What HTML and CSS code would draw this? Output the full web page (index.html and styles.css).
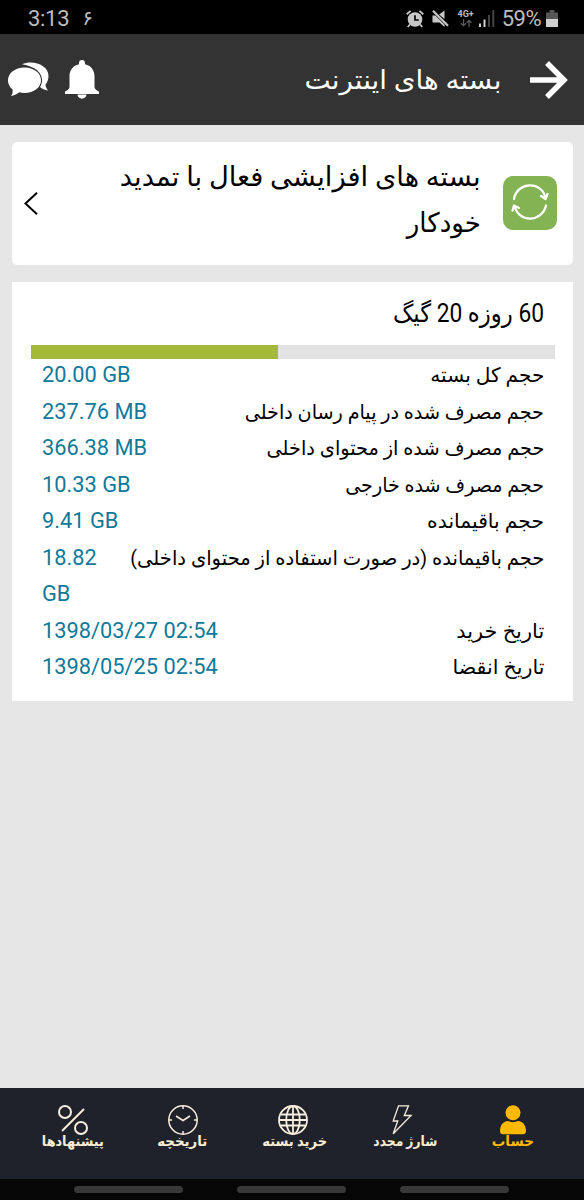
FILE: index.html
```html
<!DOCTYPE html>
<html lang="fa" dir="rtl">
<head>
<meta charset="utf-8">
<title>بسته های اینترنت</title>
<link rel="stylesheet" href="styles.css">
</head>
<body>
<div class="statusbar">
  <span class="clock">3:13</span>
  <span class="notif">۶</span>
  <span class="spacer"></span>
  <svg class="alarm" width="18" height="18" viewBox="0 0 18 18"><circle cx="9" cy="9.500" r="7.300" fill="#c8c8c8"/><path d="M.7 4.200 4.600.9M17.300 4.200 13.400.9M3.800 14.500 1.800 17M14.200 14.500l2 2.500" stroke="#c8c8c8" stroke-width="1.800"/><path d="M9 5.200v4.800h3.800" stroke="#000" stroke-width="1.700" fill="none"/></svg>
  <svg class="mute" width="17" height="17" viewBox="0 0 17 17"><path d="M.5 5.500h3l9 9V17L7.500 12.500H.5zM12.500.5v8.500L7.200 4.600z" fill="#c8c8c8"/><path d="M1 .8 16 15.800" stroke="#c8c8c8" stroke-width="2.200"/></svg>
  <span class="net"><b>4G+</b><svg width="12" height="8" viewBox="0 0 12 8" fill="none" stroke="#5a5a5a" stroke-width="1.300"><path d="M3.500 0v6.500M1 4.200l2.500 2.500L6 4.200M9 8V1.300M6.700 3.700 9 1.300l2.500 2.400"/></svg></span>
  <svg class="signal" width="16" height="17" viewBox="0 0 16 17"><path d="M0 13.500h2V17H0zM4.500 9.500h2V17h-2z" fill="#d0d0d0"/><path d="M9 5h2v12H9zM13.300 0h2v17h-2z" fill="#444"/></svg>
  <span class="percent">59%</span>
  <svg class="battery" width="12" height="18" viewBox="0 0 12 18"><path d="M3.500 0h5v2.500H12V9H0V2.500h3.500z" fill="#555"/><path d="M0 9h12v8H0z" fill="#d0d0d0"/></svg>
</div>

<header class="header">
  <svg class="chat" width="42" height="36" viewBox="0 0 42 36"><path d="M15 2.200C26-2.500 41.500 3 41.500 14c0 4-1.500 6.500-3 8.500 0 2 1 4 2.500 6-3.500-.5-6-1.500-8-3.500 5.500-9 0-20-18-22.800z" fill="#fff"/><path d="M17.500 5.500c9.500 0 16.500 5.500 16.500 12.800S27 31 17.500 31c-2 0-3.700-.2-5.300-.7C9.500 32.500 7 33.800 4 34c1.500-2 2-4 1.500-6.500C2.500 25 1 22 1 18.300 1 11 8 5.500 17.500 5.500z" fill="#fff"/></svg>
  <svg class="bell" width="34" height="39" viewBox="0 0 34 39"><path d="M14 4.200V3a3 3 0 0 1 6 0v1.200c6 1.300 9.500 6 9.500 12V26c0 2.500 1 3.800 4.500 5.500V34H0v-2.500C3.500 29.800 4.500 28.500 4.500 26v-9.800c0-6 3.500-10.700 9.500-12zM12.500 34.500h9c0 5.500-9 5.500-9 0z" fill="#fff"/></svg>
  <span class="spacer"></span>
  <h1 class="title"><span class="fit" style="--sx:1.068">بسته های اینترنت</span></h1>
  <svg class="back" width="38" height="38" viewBox="0 0 38 38" fill="none" stroke="#fff" stroke-width="5.500"><path d="M0 19h34M17 2l17 17-17 17"/></svg>
</header>

<main class="content">
  <section class="renew">
    <svg class="renew-icon" width="54" height="54" viewBox="0 0 54 54"><rect width="54" height="54" rx="10" fill="#83b352"/><g fill="none" stroke="#fff" stroke-width="2.300" stroke-linecap="round" stroke-linejoin="round"><path d="M11 23C14 5.500 39 4.500 42.500 22M38 20l4.500 3 2-5M43 29.500C39 46.500 16 47.500 11.500 30M9.500 34.500l1.500-5 5 2.500"/></g></svg>
    <div class="renew-text"><div><span class="fit" style="--sx:1.012">بسته های افزایشی فعال با تمدید</span></div><div><span class="fit" style="--sx:.964">خودکار</span></div></div>
    <svg class="chevron" width="14" height="23" viewBox="0 0 14 23" fill="none" stroke="#000" stroke-width="2"><path d="M13 .8 1.500 11.500 13 22.200"/></svg>
  </section>

  <section class="package">
    <h2 class="name"><span class="fit" style="--sx:.91">60 روزه 20 گیگ</span></h2>
    <div class="bar"><div class="used"></div></div>
    <dl class="rows">
      <div class="row"><dt><span class="fit" style="--sx:1.006">حجم کل بسته</span></dt><dd>20.00 GB</dd></div>
      <div class="row"><dt><span class="fit" style="--sx:.959">حجم مصرف شده در پیام رسان داخلی</span></dt><dd>237.76 MB</dd></div>
      <div class="row"><dt><span class="fit" style="--sx:.967">حجم مصرف شده از محتوای داخلی</span></dt><dd>366.38 MB</dd></div>
      <div class="row"><dt><span class="fit" style="--sx:.956">حجم مصرف شده خارجی</span></dt><dd>10.33 GB</dd></div>
      <div class="row"><dt><span class="fit" style="--sx:1.017">حجم باقیمانده</span></dt><dd>9.41 GB</dd></div>
      <div class="row"><dt><span class="fit" style="--sx:.978">حجم باقیمانده (در صورت استفاده از محتوای داخلی)</span></dt><dd>18.82<br>GB</dd></div>
      <div class="row"><dt><span class="fit" style="--sx:1.045">تاریخ خرید</span></dt><dd>1398/03/27 02:54</dd></div>
      <div class="row"><dt><span class="fit" style="--sx:1.029">تاریخ انقضا</span></dt><dd>1398/05/25 02:54</dd></div>
    </dl>
  </section>
</main>

<nav class="tabs">
  <a class="tab active"><svg width="30" height="30" viewBox="0 0 30 30" fill="#ffb900"><circle cx="15" cy="7.700" r="7.500"/><path d="M2 26c0-6.500 4-10 8-10 3 1.500 7 1.500 10 0 4 0 8 3.500 8 10 0 2-1 3.300-3 3.300H5c-2 0-3-1.300-3-3.300z"/></svg><span class="fit" style="--sx:.962">حساب</span></a>
  <a class="tab"><svg width="30" height="30" viewBox="0 0 30 30" fill="none" stroke="#f8eedc" stroke-width="1.300"><path d="M10.500.8h10l-4.200 9.700h6.800L5.200 28.800 9.800 16H5.200z"/></svg><span class="fit" style="--sx:.881;--dx:3px">شارژ مجدد</span></a>
  <a class="tab"><svg width="30" height="30" viewBox="0 0 30 30" fill="none" stroke="#f8eedc" stroke-width="1.800"><circle cx="15" cy="15" r="14"/><ellipse cx="15" cy="15" rx="6.800" ry="14"/><path d="M15 1v28M1 15h28M3 9.500h24M3 20.500h24"/></svg><span class="fit" style="--sx:.937;--dx:2px">خرید بسته</span></a>
  <a class="tab"><svg width="30" height="30" viewBox="0 0 30 30" fill="none" stroke="#f8eedc" stroke-width="1.500"><circle cx="15" cy="15" r="14.200"/><path d="M15 1v3M15 26v3M1 15h3M26 15h3M8 11l7 4.500 7-4.500"/></svg><span class="fit" style="--sx:.952">تاریخچه</span></a>
  <a class="tab"><svg width="30" height="30" viewBox="0 0 30 30" fill="none" stroke="#f8eedc" stroke-width="2"><circle cx="7" cy="7" r="6"/><circle cx="23" cy="23" r="6"/><path d="M26 4 4 26"/></svg><span class="fit" style="--sx:.917">پیشنهادها</span></a>
</nav>
<div class="gestures"><i></i><i></i><i></i></div>
</body>
</html>
```
FILE: styles.css
```css
* { box-sizing: border-box; }
body { margin: 0; width: 584px; height: 1200px; display: flex; flex-direction: column; overflow: hidden; background: #e6e6e6; color: #000; font-family: Roboto, "DejaVu Sans", sans-serif; }
.spacer { flex: 1; }
.fit { display: inline-block; white-space: nowrap; transform-origin: right center; transform: translateX(var(--dx, 0)) scaleX(var(--sx, 1)); }
.statusbar { flex: none; height: 34px; direction: ltr; display: flex; align-items: center; padding: 3px 26px 0 28px; background: #000; color: #bdbdbd; }
.clock { font-size: 22px; line-height: 30px; letter-spacing: -0.3px; }
.notif { margin-left: 13px; font-size: 20px; line-height: 20px; padding-bottom: 1px; }
.mute { margin-left: 8px; }
.net { margin-left: 8px; width: 18px; display: flex; flex-direction: column; align-items: center; font-size: 9px; line-height: 9px; }
.signal { margin-left: 4px; }
.percent { margin-left: 7px; font-size: 22px; line-height: 30px; letter-spacing: -0.5px; }
.battery { margin-left: 5px; }
.header { flex: none; height: 91px; direction: ltr; display: flex; align-items: center; padding: 0 16px 0 7px; background: #333; color: #fff; }
.bell { margin-left: 16px; }
.title { margin: 0; direction: rtl; font-size: 26px; line-height: 36px; font-weight: 400; }
.back { margin-left: 29px; }
.content { flex: 1; min-height: 0; padding: 17px 11px 0 12px; }
.renew { height: 123px; display: flex; align-items: center; padding: 0 16px 1px 12px; border-radius: 5px; background: #fff; }
.renew-text { flex: 1; min-width: 0; margin-right: 22px; padding-bottom: 6px; font-size: 27px; line-height: 46px; }
.package { height: 419px; margin-top: 17px; padding: 0 18px 0 19px; background: #fff; }
.name { margin: 0; height: 63px; padding-right: 11px; font-size: 25px; line-height: 64px; font-weight: 400; }
.bar { height: 14px; background: #e2e2e2; direction: ltr; }
.used { width: 47.1%; height: 100%; background: #a4b937; }
.rows { margin: -2px 11px 0; font-size: 21.8px; line-height: 36.5px; }
.row { display: flex; }
.row dt { flex: 1; min-width: 0; font-size: 20px; }
.row dd { margin: 0; flex: none; direction: ltr; white-space: nowrap; color: #0f7a99; }
.tabs { flex: none; height: 91px; display: grid; grid-template-columns: repeat(5, 110px); justify-content: center; padding: 16px 0 0 1px; background: #20222b; color: #fbeed2; font-size: 14px; font-weight: 700; }
.tab { display: flex; flex-direction: column; align-items: center; line-height: 15px; }
.tab svg { position: relative; top: 1px; }
.tab .fit { transform-origin: center; }
.active { color: #ffb900; }
.gestures { flex: none; height: 21px; display: flex; justify-content: center; gap: 54px; padding: 7px 2px 0 0; background: #060606; direction: ltr; }
.gestures i { width: 109px; height: 7px; border-radius: 4px; background: #383838; }
```
